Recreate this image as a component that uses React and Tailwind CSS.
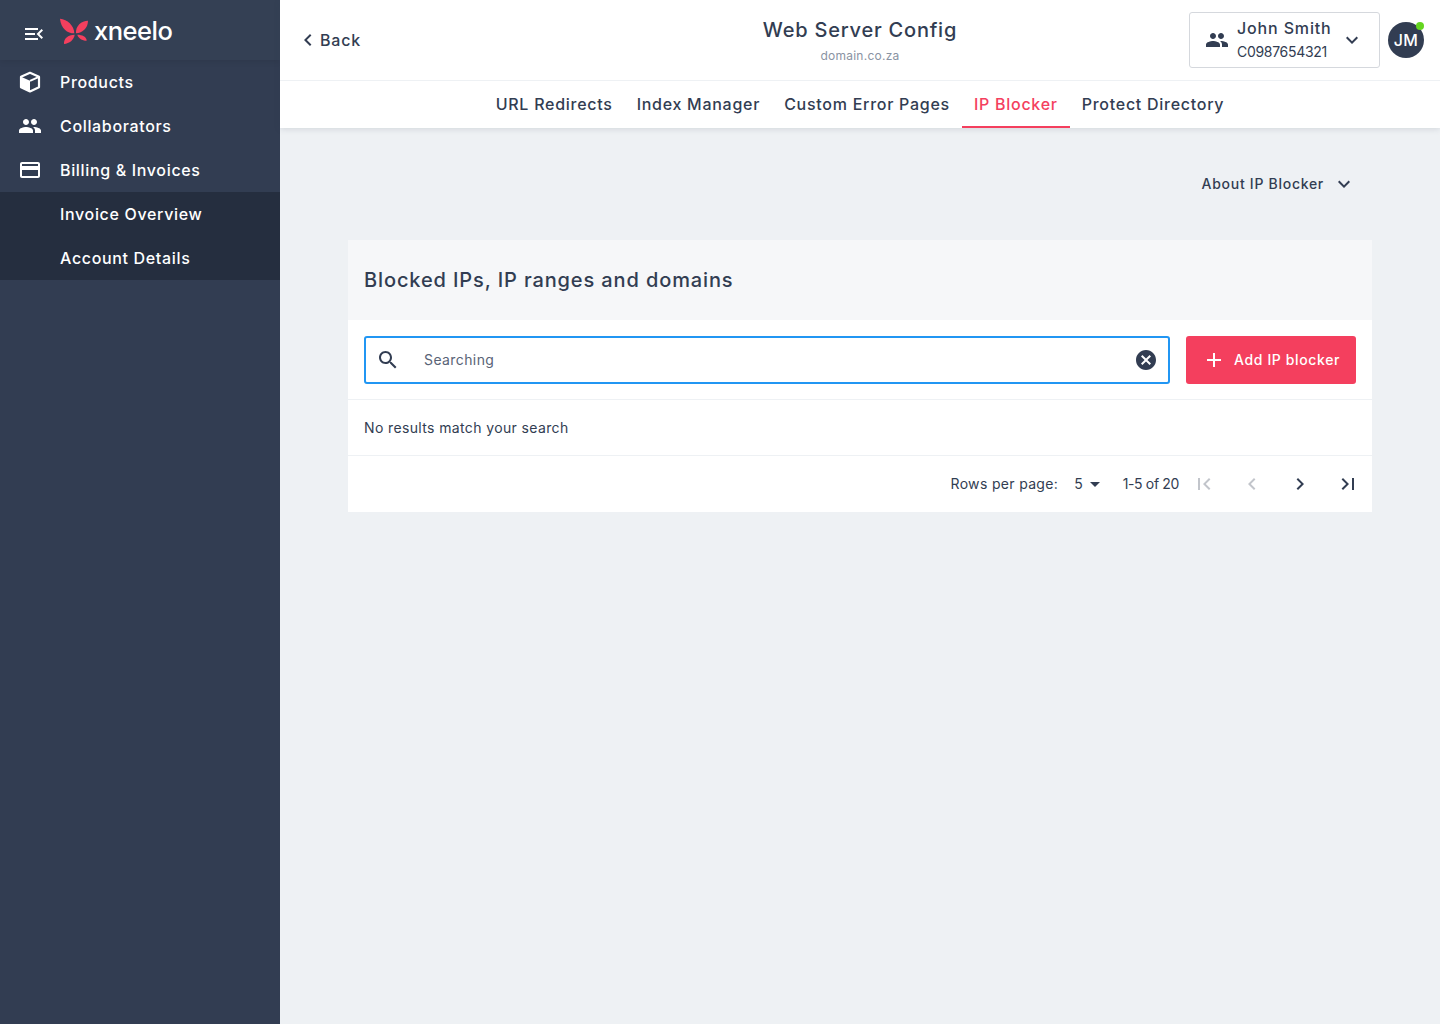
const P = {
  group: "M16 11c1.66 0 2.99-1.34 2.99-3S17.66 5 16 5c-1.66 0-3 1.34-3 3s1.34 3 3 3zm-8 0c1.66 0 2.99-1.34 2.99-3S9.66 5 8 5C6.34 5 5 6.34 5 8s1.34 3 3 3zm0 2c-2.33 0-7 1.17-7 3.5V19h14v-2.5c0-2.33-4.67-3.5-7-3.5zm8 0c-.29 0-.62.02-.97.05 1.16.84 1.97 1.97 1.97 3.45V19h6v-2.5c0-2.33-4.67-3.5-7-3.5z",
  card: "M20 4H4c-1.11 0-1.99.89-1.99 2L2 18c0 1.11.89 2 2 2h16c1.11 0 2-.89 2-2V6c0-1.11-.89-2-2-2zm0 14H4v-6h16v6zm0-10H4V6h16v2z",
  search: "M15.5 14h-.79l-.28-.27C15.41 12.59 16 11.11 16 9.5 16 5.91 13.09 3 9.5 3S3 5.91 3 9.5 5.91 16 9.5 16c1.61 0 3.09-.59 4.23-1.57l.27.28v.79l5 4.99L20.49 19l-4.99-5zm-6 0C7.01 14 5 11.99 5 9.5S7.01 5 9.5 5 14 7.01 14 9.5 11.99 14 9.5 14z",
  more: "M16.59 8.59L12 13.17 7.41 8.59 6 10l6 6 6-6z",
  left: "M15.41 7.41L14 6l-6 6 6 6 1.41-1.41L10.83 12z",
  right: "M10 6L8.59 7.41 13.17 12l-4.58 4.59L10 18l6-6z",
  first: "M18.41 16.59L13.82 12l4.59-4.59L17 6l-6 6 6 6zM6 6h2v12H6z",
  last: "M5.59 7.41L10.18 12l-4.59 4.59L7 18l6-6-6-6zM16 6h2v12h-2z",
  add: "M19 13h-6v6h-2v-6H5v-2h6V5h2v6h6v2z",
  cancel: "M12 2C6.47 2 2 6.47 2 12s4.47 10 10 10 10-4.47 10-10S17.53 2 12 2zm5 13.59L15.59 17 12 13.41 8.41 17 7 15.59 10.59 12 7 8.41 8.41 7 12 10.59 15.59 7 17 8.41 13.41 12 17 15.59z",
  drop: "M7 10l5 5 5-5z",
  menu: "M3 18h13v-2H3v2zm0-5h10v-2H3v2zm0-7v2h13V6H3zm18 9.59L17.42 12 21 8.41 19.59 7l-5 5 5 5L21 15.59z",
};

function Icon({ d, className }) {
  return (
    <svg viewBox="0 0 24 24" fill="currentColor" className={className}>
      <path d={d} />
    </svg>
  );
}

function Logo() {
  return (
    <svg viewBox="0 0 84 78" className="h-[26px] w-[28px]" fill="#f43f5e">
      <path d="M0 2C22 4 42 22 43 46C22 46 3 32 0 2Z" />
      <path d="M84 8C64 8 46 24 48 46C68 44 84 30 84 8Z" />
      <path d="M12 78C10 62 24 50 44 50C42 66 28 76 12 78Z" />
      <path d="M80 68C80 56 66 50 52 50C54 60 66 68 80 68Z" />
    </svg>
  );
}

function Box() {
  return (
    <svg viewBox="0 0 22 22" className="h-[22px] w-[22px]">
      <path d="M11 1.800 20 5.800V16.300L11 20.500 2 16.300V5.800Z" fill="none" stroke="#fff" strokeWidth="2.200" strokeLinejoin="round" />
      <path d="M2 5.800 11 9.800V20.500L2 16.300Z" fill="#fff" />
      <path d="M11 9.800 20 5.800" stroke="#fff" strokeWidth="2" />
    </svg>
  );
}

function NavItem({ icon, label, sub }) {
  return (
    <div className={`flex h-11 items-center text-white ${sub ? "bg-[#252e3f] pl-[60px]" : ""}`}>
      {!sub && <div className="flex w-[60px] justify-start pl-[19px]">{icon}</div>}
      <span className="text-[16px] font-medium tracking-[0.66px]">{label}</span>
    </div>
  );
}

function Tab({ label, active }) {
  return (
    <div className={`flex h-[47px] items-center border-b-2 px-3 text-[16px] font-medium tracking-[0.73px] ${active ? "border-[#f43f5e] text-[#f43f5e]" : "border-transparent text-[#323d52]"}`}>
      {label}
    </div>
  );
}

export default function App() {
  return (
    <div className="flex min-h-[1024px] bg-[#eef1f4] text-[#323d52]" style={{ fontFamily: '"Inter", "Liberation Sans", sans-serif' }}>
      <aside className="w-[280px] shrink-0 bg-[#323d52]">
        <div className="flex h-[60px] items-center bg-[#344054] shadow-[0_2px_6px_rgba(0,0,0,0.08)]">
          <Icon d={P.menu} className="ml-[22px] mt-2 h-6 w-6 text-white" />
          <div className="ml-[14px] mt-[1px]"><Logo /></div>
          <span className="ml-[6px] mt-[2px] text-[25.500px] font-medium leading-none tracking-[-0.5px] text-white">xneelo</span>
        </div>
        <nav>
          <NavItem icon={<Box />} label="Products" />
          <NavItem icon={<Icon d={P.group} className="-ml-[1px] h-6 w-6" />} label="Collaborators" />
          <NavItem icon={<Icon d={P.card} className="-ml-[1px] h-6 w-6" />} label="Billing & Invoices" />
          <NavItem sub label="Invoice Overview" />
          <NavItem sub label="Account Details" />
        </nav>
      </aside>

      <main className="min-w-0 flex-1">
        <header className="bg-white shadow-[0_1px_6px_rgba(50,61,82,0.15)]">
          <div className="grid h-[81px] grid-cols-[1fr_auto_1fr] items-center border-b border-[#eef1f4] pl-4 pr-4">
            <div className="flex items-center">
              <Icon d={P.left} className="h-6 w-6" />
              <span className="text-[16px] font-medium tracking-[0.8px]">Back</span>
            </div>
            <div className="text-center">
              <div className="text-[20px] font-medium leading-[28px] tracking-[0.78px]">Web Server Config</div>
              <div className="mt-[4px] text-[12px] leading-4 tracking-[0.25px] text-[#8a93a3]">domain.co.za</div>
            </div>
            <div className="flex items-center justify-end">
              <div className="flex h-14 w-[191px] items-center rounded-[3px] border border-[#d5d8dd] pl-[15px]">
                <Icon d={P.group} className="h-6 w-6" />
                <div className="ml-2 w-[103px]">
                  <div className="text-[16px] font-medium leading-6 tracking-[0.85px]">John Smith</div>
                  <div className="text-[14px] leading-6 tracking-[-0.3px]">C0987654321</div>
                </div>
                <Icon d={P.more} className="h-6 w-6" />
              </div>
              <div className="relative ml-2 flex h-9 w-9 items-center justify-center rounded-full bg-[#323d52] text-[16px] font-medium tracking-[0.3px] text-white">
                JM
                <span className="absolute right-0 top-0 h-2 w-2 rounded-full bg-[#64d51f]" />
              </div>
            </div>
          </div>
          <div className="flex h-[47px] justify-center">
            <Tab label="URL Redirects" />
            <Tab label="Index Manager" />
            <Tab label="Custom Error Pages" />
            <Tab label="IP Blocker" active />
            <Tab label="Protect Directory" />
          </div>
        </header>

        <section className="px-[68px]">
          <div className="flex h-[112px] items-center justify-end pr-4">
            <span className="mb-[2px] text-[14px] font-medium tracking-[0.72px]">About IP Blocker</span>
            <Icon d={P.more} className="ml-2 h-6 w-6" />
          </div>
          <div className="bg-white">
            <div className="flex h-20 items-center bg-[#f6f7f9] px-4 text-[20px] font-medium tracking-[0.88px]">
              Blocked IPs, IP ranges and domains
            </div>
            <div className="flex h-20 items-center gap-4 border-b border-[#eef1f4] px-4">
              <div className="flex h-12 flex-1 items-center rounded-[3px] border-2 border-[#2196f3] pl-[10px] pr-[10px]">
                <Icon d={P.search} className="h-6 w-6" />
                <span className="ml-6 flex-1 text-[14px] tracking-[0.4px] text-[#596376]">Searching</span>
                <Icon d={P.cancel} className="h-6 w-6" />
              </div>
              <div className="flex h-12 w-[170px] items-center rounded-[3px] bg-[#f43f5e] pl-4 text-white">
                <Icon d={P.add} className="h-6 w-6" />
                <span className="ml-2 text-[14px] font-medium tracking-[0.63px]">Add IP blocker</span>
              </div>
            </div>
            <div className="flex h-14 items-center border-b border-[#eef1f4] px-4 text-[14px] tracking-[0.37px]">
              No results match your search
            </div>
            <div className="flex h-14 items-center justify-end pr-[12px] text-[14px]">
              <span className="mb-[2px] tracking-[0.33px]">Rows per page:</span>
              <span className="mb-[2px] ml-4">5</span>
              <Icon d={P.drop} className="h-6 w-6" />
              <span className="mb-[2px] ml-4 tracking-[-0.35px]">1-5 of 20</span>
              <Icon d={P.first} className="ml-[13px] h-6 w-6 text-[#c2c5cb]" />
              <Icon d={P.left} className="ml-6 h-6 w-6 text-[#c2c5cb]" />
              <Icon d={P.right} className="ml-6 h-6 w-6" />
              <Icon d={P.last} className="ml-6 h-6 w-6" />
            </div>
          </div>
        </section>
      </main>
    </div>
  );
}
